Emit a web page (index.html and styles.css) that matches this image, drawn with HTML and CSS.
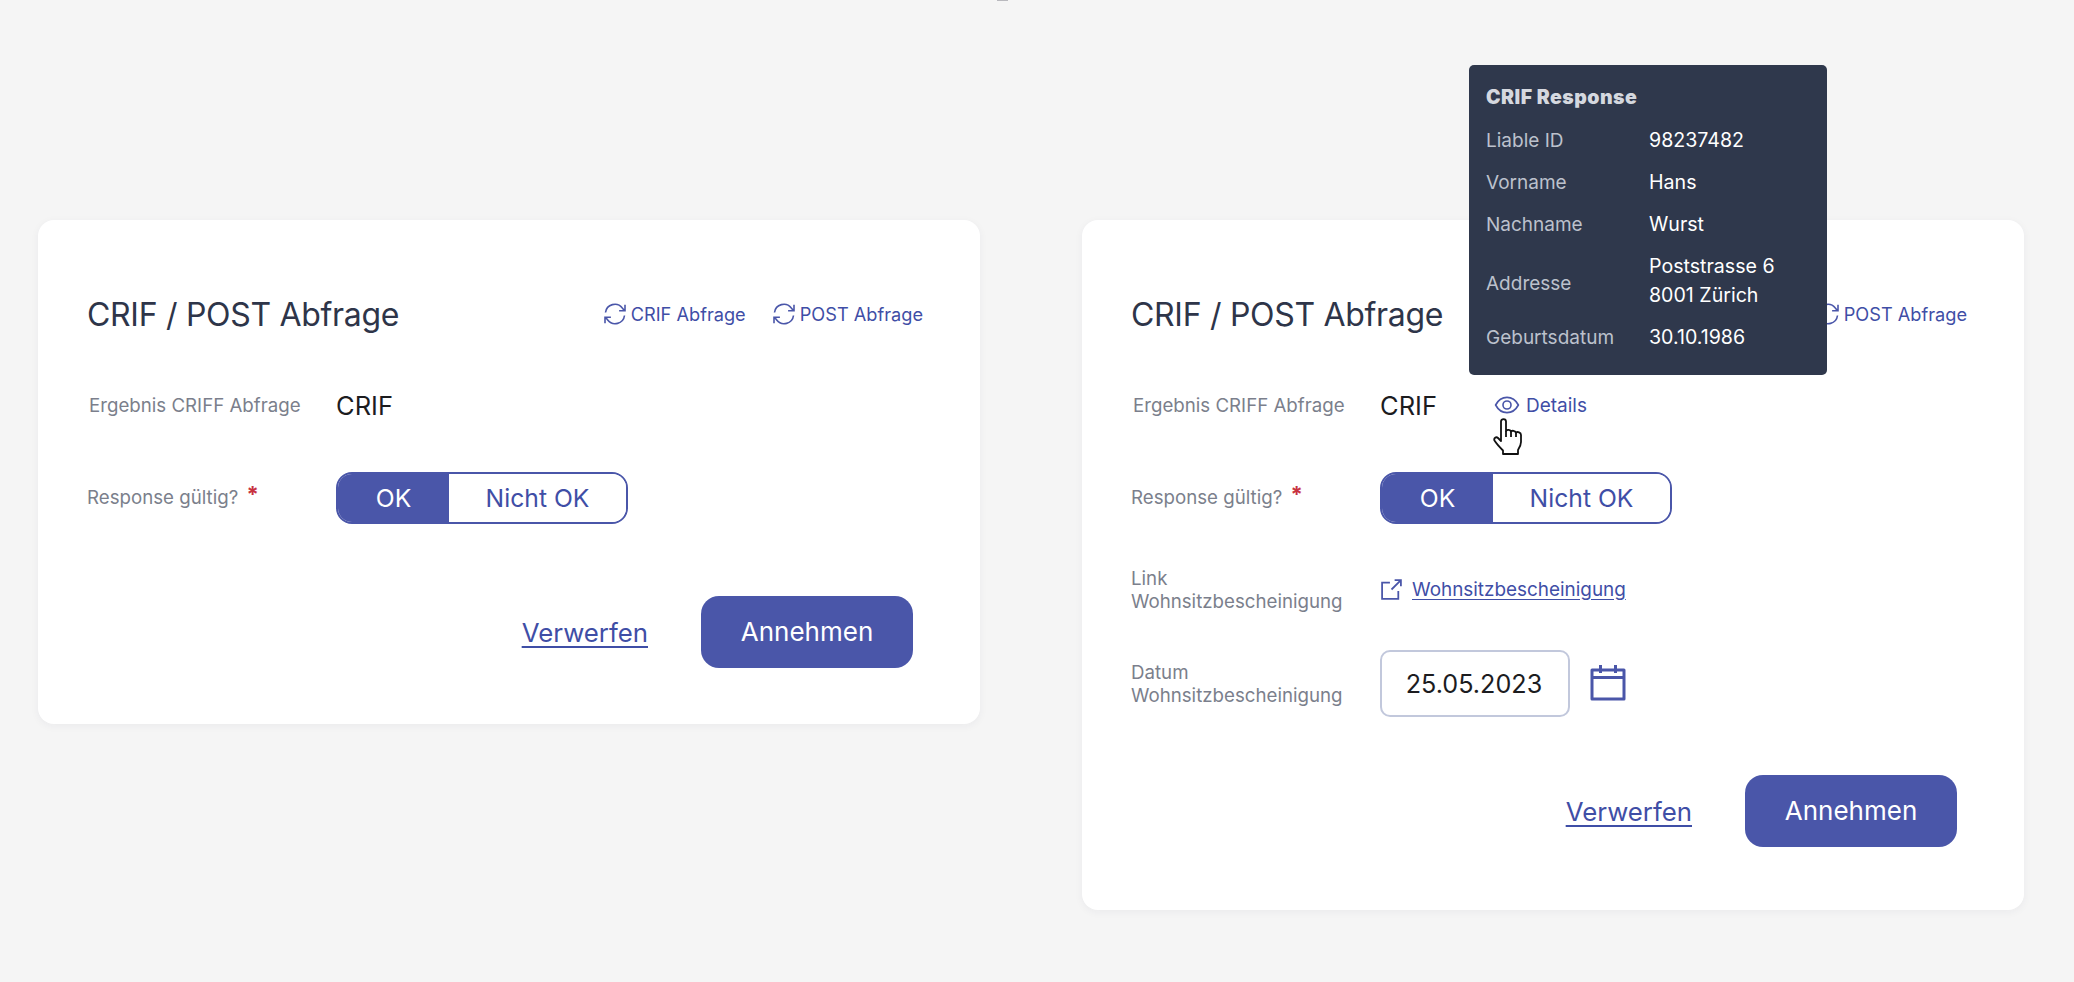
FILE: index.html
```html
<!DOCTYPE html>
<html lang="de">
<head>
<meta charset="utf-8">
<title>CRIF / POST Abfrage</title>
<link rel="stylesheet" href="styles.css">
</head>
<body>
<div class="top-mark"></div>
<main class="page">
  <section class="card card-short">
    <header class="head">
      <h2 class="title">CRIF / POST Abfrage</h2>
      <div class="head-actions">
        <a class="action"><svg class="ic-sync" viewBox="0 0 24 24"><path d="M2.500 10.500A9.400 9.400 0 0 1 19.300 6l2 2.500M22 2.800v5.900h-5.900M21.500 13.500A9.400 9.400 0 0 1 4.700 18l-2-2.500M2 21.200v-5.900h5.900"/></svg>CRIF Abfrage</a>
        <a class="action"><svg class="ic-sync" viewBox="0 0 24 24"><path d="M2.500 10.500A9.400 9.400 0 0 1 19.300 6l2 2.500M22 2.800v5.900h-5.900M21.500 13.500A9.400 9.400 0 0 1 4.700 18l-2-2.500M2 21.200v-5.900h5.900"/></svg>POST Abfrage</a>
      </div>
    </header>
    <div class="row row-result">
      <div class="label label-result">Ergebnis CRIFF Abfrage</div>
      <div class="value">CRIF</div>
    </div>
    <div class="row row-toggle">
      <div class="label label-up">Response gültig? <span class="req">*</span></div>
      <div class="toggle"><span class="opt opt-on">OK</span><span class="opt opt-off">Nicht OK</span></div>
    </div>
    <div class="foot foot-short">
      <a class="discard">Verwerfen</a>
      <button class="accept">Annehmen</button>
    </div>
  </section>

  <section class="card card-tall">
    <header class="head">
      <h2 class="title">CRIF / POST Abfrage</h2>
      <div class="head-actions">
        <a class="action"><svg class="ic-sync" viewBox="0 0 24 24"><path d="M2.500 10.500A9.400 9.400 0 0 1 19.300 6l2 2.500M22 2.800v5.900h-5.900M21.500 13.500A9.400 9.400 0 0 1 4.700 18l-2-2.500M2 21.200v-5.900h5.900"/></svg>CRIF Abfrage</a>
        <a class="action"><svg class="ic-sync" viewBox="0 0 24 24"><path d="M2.500 10.500A9.400 9.400 0 0 1 19.300 6l2 2.500M22 2.800v5.900h-5.900M21.500 13.500A9.400 9.400 0 0 1 4.700 18l-2-2.500M2 21.200v-5.900h5.900"/></svg>POST Abfrage</a>
      </div>
    </header>
    <div class="row row-result">
      <div class="label label-result">Ergebnis CRIFF Abfrage</div>
      <div class="value">CRIF</div>
      <a class="details"><svg class="ic-eye" viewBox="0 0 24 24"><path d="M1.500 12C4 7.300 7.700 5 12 5s8 2.300 10.500 7c-2.500 4.700-6.200 7-10.500 7s-8-2.300-10.500-7z"/><circle cx="12" cy="12" r="3.700"/></svg>Details</a>
      <svg class="cursor" viewBox="0 0 30 37"><path d="M8 3.500c0-3.300 5-3.300 5 0V13c1-1.500 4-1.500 5 .5 1-1.200 4-1 5 1 1.500-1 5-.3 5 2.500v7c0 3-1 5-3 8v4H10v-3.500c-3-3-6-6-8.500-10-1-2 1.500-4.500 3.500-2.500l3 3z"/><path d="M13 13v6M18 13.500V19M23 14.500V19"/></svg>
    </div>
    <div class="row row-toggle">
      <div class="label label-up">Response gültig? <span class="req">*</span></div>
      <div class="toggle"><span class="opt opt-on">OK</span><span class="opt opt-off">Nicht OK</span></div>
    </div>
    <div class="row row-link">
      <div class="label label-wrap">Link Wohnsitzbescheinigung</div>
      <a class="doc-link"><svg class="ic-ext" viewBox="0 0 22 22"><path d="M9.500 4.500H2v15.500h15.500v-7.500M11 11l9-9M14 2h6v6"/></svg><span class="doc-text">Wohnsitzbescheinigung</span></a>
    </div>
    <div class="row row-date">
      <div class="label label-wrap">Datum Wohnsitzbescheinigung</div>
      <div class="date">25.05.2023</div>
      <svg class="ic-cal" viewBox="0 0 36 38"><path d="M2 7h32v29H2zM2 14.500h32"/><path class="pin" d="M10.500 2v8M25.500 2v8"/></svg>
    </div>
    <div class="foot foot-tall">
      <a class="discard">Verwerfen</a>
      <button class="accept">Annehmen</button>
    </div>
    <aside class="tooltip">
      <h3 class="tip-title">CRIF Response</h3>
      <dl class="tip-grid">
        <dt>Liable ID</dt><dd>98237482</dd>
        <dt>Vorname</dt><dd>Hans</dd>
        <dt>Nachname</dt><dd>Wurst</dd>
        <dt class="tip-low">Addresse</dt><dd>Poststrasse 6<br>8001 Zürich</dd>
        <dt>Geburtsdatum</dt><dd>30.10.1986</dd>
      </dl>
    </aside>
  </section>
</main>
</body>
</html>
```
FILE: styles.css
```css
* { box-sizing: border-box; }
html, body { margin: 0; height: 100%; }
body {
  position: relative;
  height: 982px;
  overflow: hidden;
  background: #f5f5f5;
  font-family: "Inter", "Liberation Sans", sans-serif;
  color: #1c1c1f;
}
.top-mark {
  position: absolute;
  left: 997px;
  top: 0;
  width: 11px;
  height: 1px;
  background: #b9b9be;
}
.page {
  display: flex;
  align-items: flex-start;
  gap: 102px;
  padding: 220px 0 0 38px;
}
.card {
  position: relative;
  width: 942px;
  padding: 74px 52px 0 49px;
  background: #fff;
  border-radius: 16px;
  box-shadow: 0 2px 8px rgba(40, 44, 70, .05);
}
.card-short { height: 504px; }
.card-tall { height: 690px; }
.head {
  display: flex;
  align-items: center;
  justify-content: space-between;
  height: 40px;
  padding-right: 5px;
}
.title {
  margin: 0;
  padding-top: 2px;
  font-size: 32px;
  font-weight: 400;
  line-height: 40px;
  letter-spacing: -.3px;
  color: #2e3549;
}
.head-actions {
  display: flex;
  gap: 26px;
}
.action, .details {
  display: flex;
  align-items: center;
  font-size: 18.200px;
  color: #3f4ea6;
}
.ic-sync {
  width: 24px;
  height: 24px;
  margin-right: 4px;
  fill: none;
  stroke: #4a56a9;
  stroke-width: 1.600;
}
.row { display: flex; align-items: center; }
.label {
  width: 249px;
  flex: none;
  font-size: 18.700px;
  line-height: 23px;
  color: #7b7f8c;
}
.label-result { padding-left: 2px; }
.label-up { padding-bottom: 2px; }
.label-wrap { padding-right: 12px; }
.req {
  position: relative;
  top: -2px;
  margin-left: 3px;
  font-size: 22px;
  line-height: 1;
  color: #c8323f;
  font-weight: 700;
}
.value {
  width: 114px;
  flex: none;
  font-size: 25.500px;
  color: #1c1c1f;
}
.row-result { position: relative; height: 40px; margin-top: 51px; }
.row-toggle { margin-top: 47px; }
.row-link { margin-top: 43px; height: 46px; }
.row-date { margin-top: 37px; }
.toggle {
  display: flex;
  width: 292px;
  height: 52px;
  overflow: hidden;
  border: 2px solid #4a56a9;
  border-radius: 16px;
  font-size: 24.700px;
}
.opt {
  display: flex;
  align-items: center;
  justify-content: center;
}
.opt-on { width: 111px; background: #4a56a9; color: #fff; }
.opt-off { flex: 1; background: #fff; color: #3f4ea6; }
.details { font-size: 19px; }
.ic-eye {
  width: 26px;
  height: 26px;
  margin-right: 6px;
  fill: none;
  stroke: #4a56a9;
  stroke-width: 1.500;
}
.cursor {
  position: absolute;
  left: 362px;
  top: 33px;
  width: 30px;
  height: 37px;
  fill: #fff;
  stroke: #111;
  stroke-width: 1.800;
  stroke-linejoin: round;
}
.doc-link {
  display: flex;
  align-items: center;
  padding-bottom: 2px;
  font-size: 18.900px;
  color: #3f4ea6;
}
.doc-text { text-decoration: underline; text-underline-offset: 3px; }
.ic-ext {
  width: 23px;
  height: 23px;
  margin-right: 9px;
  fill: none;
  stroke: #4a56a9;
  stroke-width: 1.700;
}
.date {
  display: flex;
  align-items: center;
  justify-content: center;
  width: 190px;
  height: 67px;
  padding-right: 2px;
  border: 2px solid #c2c8dc;
  border-radius: 10px;
  font-size: 25.200px;
  color: #1c1c1f;
}
.ic-cal {
  width: 36px;
  height: 38px;
  margin-left: 20px;
  margin-bottom: 4px;
  fill: none;
  stroke: #4a56a9;
  stroke-width: 3;
  stroke-linejoin: round;
}
.foot {
  display: flex;
  align-items: center;
  justify-content: flex-end;
  gap: 53px;
  padding-right: 15px;
}
.foot-short { margin-top: 72px; }
.foot-tall { margin-top: 58px; }
.discard {
  font-size: 25.800px;
  color: #3f4ea6;
  text-decoration: underline;
  text-underline-offset: 4px;
}
.accept {
  width: 212px;
  height: 72px;
  padding-bottom: 2px;
  border: 0;
  border-radius: 18px;
  background: #4a56a9;
  color: #fff;
  font: inherit;
  font-size: 26px;
}
.tooltip {
  position: absolute;
  left: 387px;
  top: -155px;
  width: 358px;
  height: 310px;
  padding: 20px 16px 0 17px;
  background: #2f384c;
  border-radius: 5px;
  color: #fff;
}
.tip-title {
  margin: 0;
  font-size: 19.500px;
  font-weight: 900;
  line-height: 24px;
  letter-spacing: .45px;
  color: #d5d8df;
}
.tip-grid {
  display: grid;
  grid-template-columns: 163px 1fr;
  align-items: center;
  row-gap: 13px;
  margin: 17px 0 0;
  font-size: 19px;
  line-height: 29px;
}
.tip-grid dt { color: #bcc1cc; }
.tip-grid dt.tip-low { padding-top: 4px; }
.tip-grid dd { margin: 0; color: #fff; font-size: 19.600px; }
```
